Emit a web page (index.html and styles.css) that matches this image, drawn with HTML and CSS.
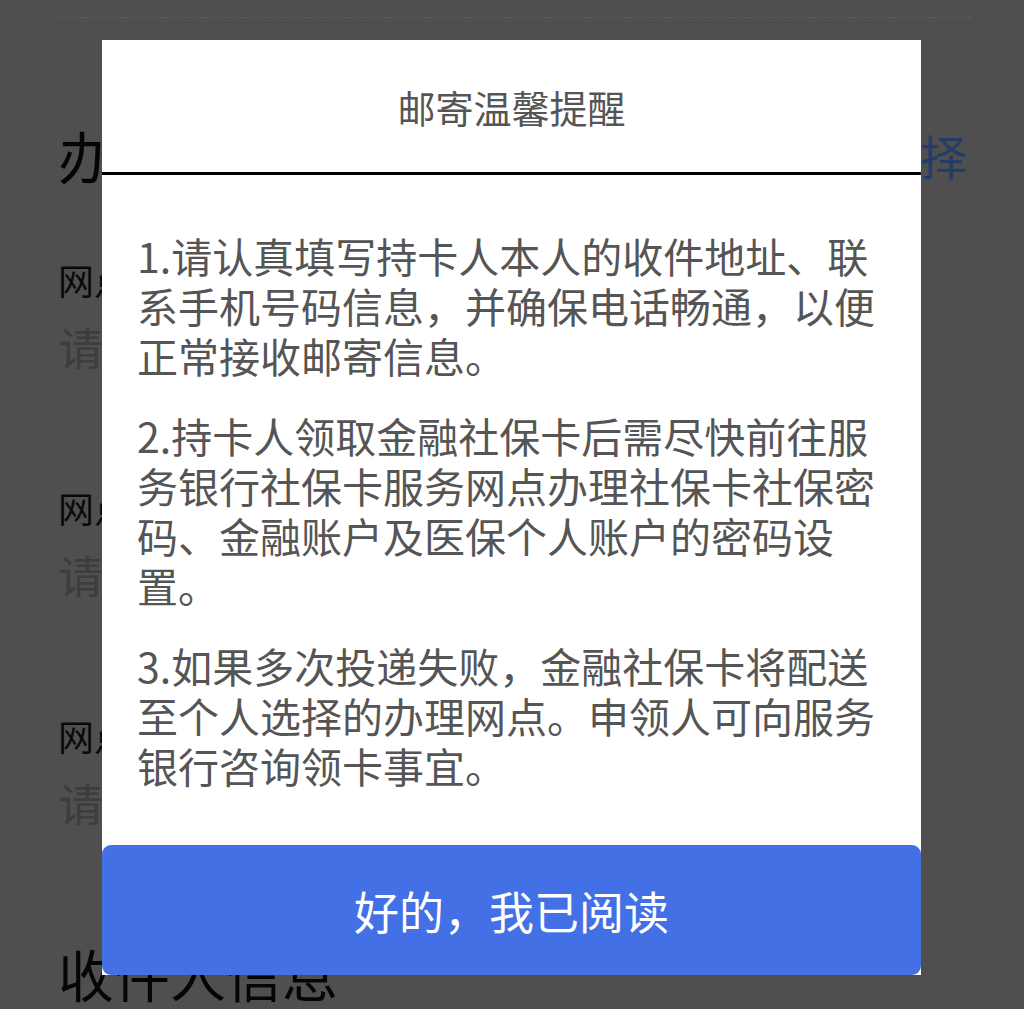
FILE: index.html
```html
<!DOCTYPE html>
<html lang="zh-CN">
<head>
<meta charset="utf-8">
<title>邮寄温馨提醒</title>
<link rel="stylesheet" href="styles.css">
</head>
<body>
<div class="page">
  <div class="topline"></div>
  <div class="section-head">
    <span class="section-title">办理网点</span>
    <span class="section-link">请选择</span>
  </div>
  <div class="field">
    <div class="field-label">网点所在市</div>
    <div class="field-value">请选择网点所在市</div>
  </div>
  <div class="field">
    <div class="field-label">网点所在区县</div>
    <div class="field-value">请选择网点所在区县</div>
  </div>
  <div class="field">
    <div class="field-label">网点名称</div>
    <div class="field-value">请选择网点名称</div>
  </div>
  <div class="section-head section-head-last">
    <span class="section-title">收件人信息</span>
  </div>
</div>

<div class="modal">
  <div class="modal-header">邮寄温馨提醒</div>
  <div class="modal-body">
    <p>1.请认真填写持卡人本人的收件地址、联系手机号码信息，并确保电话畅通，以便正常接收邮寄信息。</p>
    <p>2.持卡人领取金融社保卡后需尽快前往服务银行社保卡服务网点办理社保卡社保密码、金融账户及医保个人账户的密码设置。</p>
    <p>3.如果多次投递失败，金融社保卡将配送至个人选择的办理网点。申领人可向服务银行咨询领卡事宜。</p>
  </div>
  <button class="modal-button" type="button">好的，我已阅读</button>
</div>
</body>
</html>
```

FILE: styles.css
```css
html, body {
  margin: 0;
  padding: 0;
}
body {
  background: #4f4f4f;
  font-family: "Noto Sans CJK SC", "Noto Sans", sans-serif;
  height: 1009px;
  overflow: hidden;
}
.page {
  padding: 0 57px 0 58px;
}
.topline {
  height: 17px;
  border-bottom: 1px dashed #5d5d5d;
  margin: 0 -4px 0 2px;
}
.section-head {
  display: flex;
  justify-content: space-between;
  align-items: center;
  height: 80px;
  margin-top: 96px;
}
.section-title {
  font-size: 56px;
  color: #050505;
}
.section-link {
  font-size: 47px;
  color: #243d68;
}
.field {
  margin-top: 60px;
  margin-bottom: -1px;
}
.field + .field {
  margin-top: 106px;
}
.field-label {
  font-size: 36px;
  line-height: 50px;
  color: #0a0a0a;
  margin-bottom: 13px;
}
.field-value {
  font-size: 45px;
  line-height: 60px;
  color: #3d3d3d;
}
.section-head-last {
  margin-top: 100px;
}

.modal {
  position: fixed;
  left: 102px;
  top: 40px;
  width: 819px;
  background: #ffffff;
  display: flex;
  flex-direction: column;
}
.modal-header {
  height: 132px;
  border-bottom: 3px solid #000000;
  display: flex;
  align-items: center;
  justify-content: center;
  font-size: 38px;
  color: #555555;
}
.modal-body {
  padding: 55px 36px 55px 35px;
}
.modal-body p {
  margin: 0 0 30px 0;
  font-size: 41px;
  line-height: 50px;
  color: #555555;
}
.modal-body p:last-child {
  margin-bottom: 0;
}
.modal-button {
  height: 130px;
  border: none;
  border-radius: 9px;
  background: #4370e5;
  color: #ffffff;
  font-family: "Noto Sans CJK SC", "Noto Sans", sans-serif;
  font-size: 45px;
  padding: 0;
  margin: 0;
}
```
